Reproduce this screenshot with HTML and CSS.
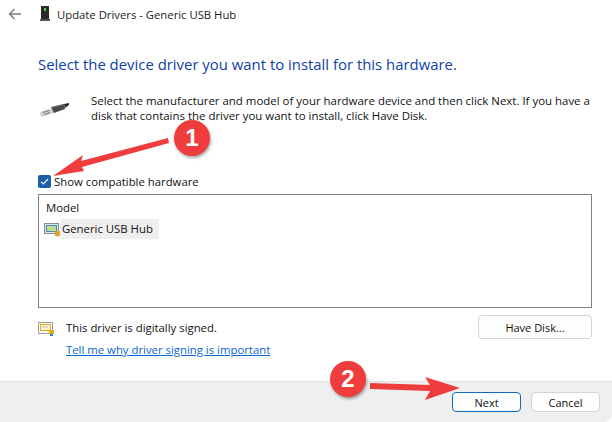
FILE: index.html
```html
<!DOCTYPE html>
<html lang="en">
<head>
<meta charset="utf-8">
<title>Update Drivers</title>
<link rel="stylesheet" href="styles.css">
</head>
<body>
<div class="window">
  <header class="titlebar">
    <svg class="back" width="14" height="12" viewBox="0 0 14 12"><path d="M13 6H1.500M6.500 1 1.500 6l5 5" fill="none" stroke="#7a7a7a" stroke-width="1.400"/></svg>
    <svg class="devicon" width="10" height="16" viewBox="0 0 10 16"><rect x="1" y="0" width="8" height="13" fill="#2a2a2a"/><rect x="4" y="2" width="2" height="3" fill="#35e04a"/><rect x="0" y="13" width="10" height="2" fill="#555"/></svg>
    <span class="title">Update Drivers - Generic USB Hub</span>
  </header>
  <main class="content">
    <h1 class="heading">Select the device driver you want to install for this hardware.</h1>
    <div class="intro">
      <svg class="usb" width="30" height="20" viewBox="0 0 30 20"><path d="M0 14 12 10l2 5-13 4z" fill="#d0d0d0"/><path d="M3 14.500l6-2M4 16.500l6-2" stroke="#777" stroke-width="1"/><path d="M11 9 24 6l1 5-11 4z" fill="#4a4a4a"/><path d="M12 9.500 24 6.500" stroke="#6d6d6d"/><path d="M24 6l5-1v2l-4 3z" fill="#2a2a2a"/></svg>
      <p class="desc">Select the manufacturer and model of your hardware device and then click Next. If you have a disk that contains the driver you want to install, click Have Disk.</p>
    </div>
    <label class="check">
      <span class="box"><svg width="13" height="13" viewBox="0 0 13 13"><path d="M3 6.800 5.300 9 10 4" fill="none" stroke="#fff" stroke-width="1.100"/></svg></span>
      <span>Show compatible hardware</span>
    </label>
    <section class="list">
      <div class="list-head">Model</div>
      <div class="list-row">
        <svg class="cert" width="17" height="15" viewBox="0 0 17 15"><rect x="0.500" y="1.500" width="14" height="10" fill="#dfe8ee" stroke="#7f8f9c"/><rect x="2.500" y="3.500" width="10" height="6" fill="#b9e08a" stroke="#4f86b8"/><circle cx="13.500" cy="11.500" r="3" fill="#d4a72c"/></svg>
        <span class="row-label">Generic USB Hub</span>
      </div>
    </section>
    <div class="signed">
      <svg class="cert2" width="17" height="15" viewBox="0 0 17 15"><rect x="0.500" y="0.500" width="14" height="11" fill="#fff" stroke="#9a9a9a"/><rect x="2.500" y="2.500" width="10" height="6" fill="#fff6cf" stroke="#e3ab12"/><path d="M4 5h6" stroke="#bbb"/><rect x="11" y="8" width="5" height="4" fill="#e3a90f"/><rect x="12" y="12" width="3" height="2" fill="#2f7fd0"/></svg>
      <div class="signed-text">
        <div>This driver is digitally signed.</div>
        <a class="link" href="#">Tell me why driver signing is important</a>
      </div>
      <button class="btn disk">Have Disk...</button>
    </div>
  </main>
  <footer class="footer">
    <button class="btn primary">Next</button>
    <button class="btn">Cancel</button>
  </footer>
</div>
<svg class="arrows" width="612" height="422" viewBox="0 0 612 422">
  <path d="M53 176 83 155 81 161 168 138 169 143 82 167 84 171z" fill="#ef3d3d"/>
  <path d="M370 383 430 385 425 377 460 388 425 400 430 391 370 389z" fill="#ef3d3d"/>
</svg>
<div class="badge one">1</div>
<div class="badge two">2</div>
</body>
</html>
```

FILE: styles.css
```css
* { box-sizing: border-box; }
html, body { margin: 0; padding: 0; background: #fff; }
body { width: 612px; height: 422px; overflow: hidden; position: relative; font-family: "Open Sans", "Noto Sans", sans-serif; font-size: 11.350px; color: #111; }
.window { display: flex; flex-direction: column; height: 422px; }
.titlebar { display: flex; align-items: center; height: 28px; padding-left: 8px; }
.back { margin-right: 18px; }
.devicon { margin-right: 7px; }
.title { font-size: 11.300px; color: #222; }
.content { flex: 1; display: flex; flex-direction: column; padding: 25px 20px 0 38px; }
.heading { margin: 0; font-size: 14.900px; font-weight: 400; line-height: 22px; color: #0f3fa8; }
.intro { display: flex; margin-top: 18px; height: 30px; }
.usb { margin: 5px 21px 0 2px; flex: none; }
.desc { margin: 0; font-size: 11.450px; line-height: 15px; width: 516px; }
.check { display: flex; align-items: center; gap: 3px; margin-top: 51px; height: 14px; }
.box { width: 13px; height: 13px; border-radius: 2px; background: #1a5fa8; display: block; }
.box svg { display: block; }
.list { margin-top: 6px; height: 114px; border: 1px solid #7c8287; padding: 5px 0 0 5px; }
.list-head { height: 15px; line-height: 15px; padding-left: 2px; }
.list-row { display: flex; align-items: center; margin-top: 4px; height: 20px; }
.cert { flex: none; }
.row-label { background: #efefef; height: 20px; line-height: 20px; padding: 0 6px 0 2px; margin-left: -1px; }
.signed { display: flex; align-items: flex-start; margin-top: 7px; }
.cert2 { margin-top: 7px; margin-right: 11px; flex: none; }
.signed-text { flex: 1; padding-top: 5px; line-height: 15px; }
.link { display: inline-block; margin-top: 7px; color: #0a66d0; text-decoration: underline; }
.btn { font: inherit; font-size: 11px; color: #111; background: #fdfdfd; border: 1px solid #d3d3d3; border-radius: 4px; width: 69px; height: 20px; padding: 0; }
.disk { width: 114px; height: 24px; }
.footer { display: flex; justify-content: flex-end; align-items: flex-start; gap: 10px; height: 41px; padding: 10px 12px 0 0; background: #efefef; border-top: 1px solid #e2e2e2; border-bottom-right-radius: 8px; }
.primary { border-color: #0f6cbd; }
.arrows { position: absolute; left: 0; top: 0; pointer-events: none; }
.badge { position: absolute; width: 36px; height: 36px; border-radius: 50%; background: #ef3d3d; color: #fff; font-size: 24px; font-weight: 700; line-height: 36px; text-align: center; box-shadow: 1px 2px 3px rgba(0,0,0,.35); font-family: "Liberation Sans", sans-serif; }
.one { left: 174px; top: 120px; }
.two { left: 330px; top: 361px; }
```
